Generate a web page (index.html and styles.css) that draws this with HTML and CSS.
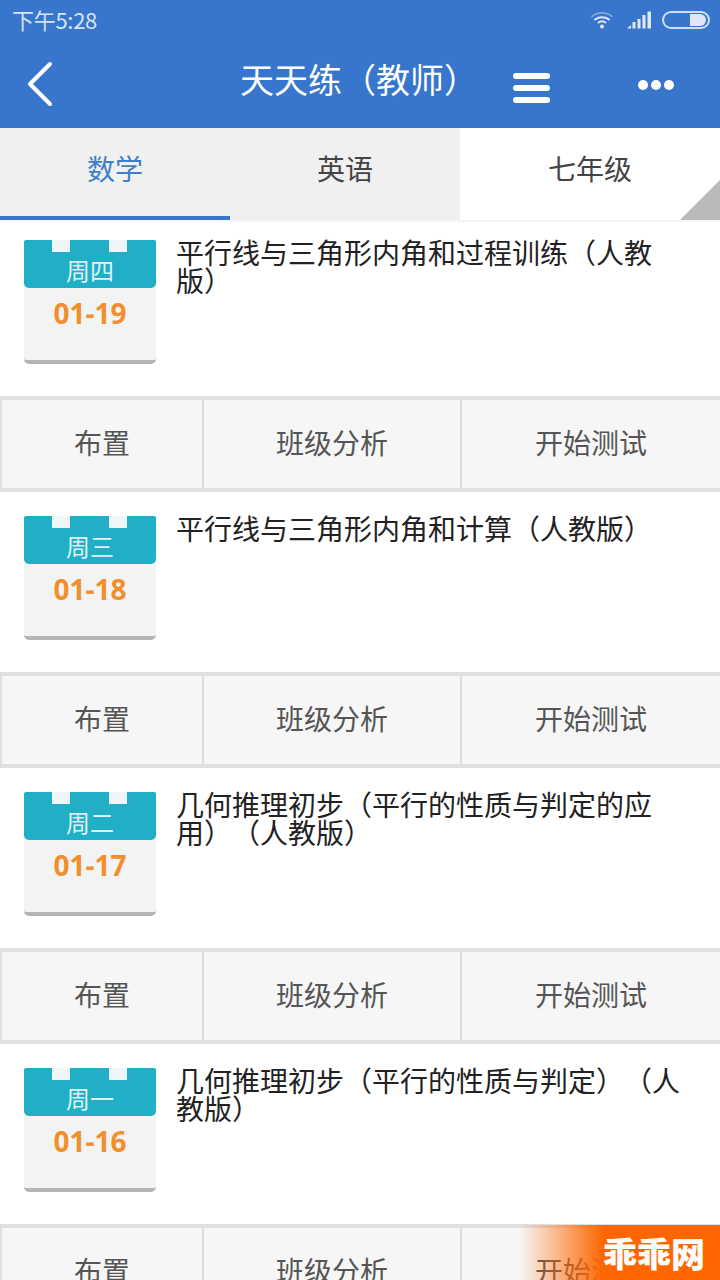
FILE: index.html
```html
<!DOCTYPE html>
<html lang="zh-CN">
<head>
    <meta charset="UTF-8">
    <meta name="viewport" content="width=device-width, initial-scale=1.0">
    <title>天天练（教师）</title>
    <link rel="stylesheet" href="styles.css">
</head>
<body>
    <!-- Status bar -->
    <div class="status-bar">
        <span class="status-time">下午5:28</span>
        <div class="status-icons">
            <svg class="wifi-icon" width="22" height="18" viewBox="0 0 22 18" fill="none" stroke="#dfe8f6" stroke-linecap="round">
                <path d="M1 5.500C6.500 0.500 15.500 0.500 21 5.500" stroke-width="1.500" opacity="0.5"/>
                <path d="M4 8.500C8 5.500 14 5.500 18 8.500" stroke-width="2"/>
                <path d="M7.500 11.500C9.500 10 12.500 10 14.500 11.500" stroke-width="2"/>
                <circle cx="11" cy="15.500" r="2" fill="#dfe8f6" stroke="none"/>
            </svg>
            <svg class="signal-icon" width="25" height="18" viewBox="0 0 25 18" fill="#dfe8f6">
                <path d="M0 17.500L4 14V17.500Z"/>
                <rect x="5.500" y="11" width="3" height="6.500"/>
                <rect x="10.500" y="8" width="3" height="9.500"/>
                <rect x="15.500" y="4" width="3" height="13.500"/>
                <rect x="20.500" y="0.500" width="3.500" height="17"/>
            </svg>
            <div class="battery"><div class="battery-level"></div></div>
        </div>
    </div>

    <!-- App bar -->
    <header class="app-bar">
        <svg class="back-icon" width="28" height="46" viewBox="0 0 28 46" fill="none" stroke="#fff" stroke-width="4" stroke-linecap="round" stroke-linejoin="round">
            <path d="M23 3L3 23L23 43"/>
        </svg>
        <h1 class="app-title">天天练（教师）</h1>
        <div class="menu-icon">
            <span></span>
            <span></span>
            <span></span>
        </div>
        <div class="more-icon">
            <span></span>
            <span></span>
            <span></span>
        </div>
    </header>

    <!-- Tabs -->
    <nav class="tabs">
        <div class="tab tab-active">数学</div>
        <div class="tab">英语</div>
        <div class="tab tab-grade">七年级</div>
    </nav>

    <!-- Exercise list -->
    <main class="exercise-list">
        <section class="exercise">
            <div class="exercise-body exercise-body-first">
                <div class="calendar">
                    <div class="calendar-head">周四</div>
                    <div class="calendar-date">01-19</div>
                </div>
                <div class="exercise-title">平行线与三角形内角和过程训练（人教版）</div>
            </div>
            <div class="actions">
                <div class="action action-assign">布置</div>
                <div class="action action-analysis">班级分析</div>
                <div class="action action-start">开始测试</div>
            </div>
        </section>
        <section class="exercise">
            <div class="exercise-body">
                <div class="calendar">
                    <div class="calendar-head">周三</div>
                    <div class="calendar-date">01-18</div>
                </div>
                <div class="exercise-title">平行线与三角形内角和计算（人教版）</div>
            </div>
            <div class="actions">
                <div class="action action-assign">布置</div>
                <div class="action action-analysis">班级分析</div>
                <div class="action action-start">开始测试</div>
            </div>
        </section>
        <section class="exercise">
            <div class="exercise-body">
                <div class="calendar">
                    <div class="calendar-head">周二</div>
                    <div class="calendar-date">01-17</div>
                </div>
                <div class="exercise-title">几何推理初步（平行的性质与判定的应用）（人教版）</div>
            </div>
            <div class="actions">
                <div class="action action-assign">布置</div>
                <div class="action action-analysis">班级分析</div>
                <div class="action action-start">开始测试</div>
            </div>
        </section>
        <section class="exercise">
            <div class="exercise-body">
                <div class="calendar">
                    <div class="calendar-head">周一</div>
                    <div class="calendar-date">01-16</div>
                </div>
                <div class="exercise-title">几何推理初步（平行的性质与判定）（人教版）</div>
            </div>
            <div class="actions">
                <div class="action action-assign">布置</div>
                <div class="action action-analysis">班级分析</div>
                <div class="action action-start">开始测试</div>
            </div>
        </section>
    </main>

    <!-- Site watermark -->
    <div class="watermark"><span class="watermark-text">乖乖网</span></div>
</body>
</html>
```

FILE: styles.css
```css
body {
    font-family: "Noto Sans CJK SC", "Noto Sans", sans-serif;
    margin: 0;
    width: 720px;
    height: 1280px;
    overflow: hidden;
    position: relative;
    background: #fff;
    color: #333;
    text-spacing-trim: space-all;
}

.status-bar {
    height: 40px;
    background: #3776cc;
    display: flex;
    justify-content: space-between;
    align-items: center;
    padding: 0 10px 0 12px;
}

.status-time {
    font-size: 22px;
    letter-spacing: -0.3px;
    line-height: 40px;
    margin-top: -3px;
    color: #d5e3f5;
}

.status-icons {
    display: flex;
    align-items: center;
}

.wifi-icon {
    margin-right: 14px;
}

.signal-icon {
    margin-right: 10px;
}

.battery {
    width: 48px;
    height: 18px;
    box-sizing: border-box;
    border: 2px solid #cfdff4;
    border-radius: 9px;
    display: flex;
    justify-content: flex-end;
    padding: 1px 2px;
}

.battery-level {
    width: 16px;
    background: #dfe6f5;
    border-radius: 0 6px 6px 0;
}

.app-bar {
    height: 88px;
    background: #3776cc;
    display: flex;
    align-items: center;
    position: relative;
}

.back-icon {
    margin-left: 27px;
    margin-top: 0;
}

.app-title {
    position: absolute;
    left: 240px;
    top: 16px;
    margin: 0;
    font-size: 34px;
    line-height: 46px;
    font-weight: 400;
    color: #fff;
    white-space: nowrap;
}

.menu-icon {
    position: absolute;
    left: 513px;
    top: 33px;
    width: 37px;
    display: flex;
    flex-direction: column;
    gap: 6px;
}

.menu-icon span {
    height: 6px;
    background: #fff;
    border-radius: 3px;
}

.more-icon {
    position: absolute;
    left: 638px;
    top: 40px;
    display: flex;
    gap: 3px;
}

.more-icon span {
    width: 10px;
    height: 10px;
    background: #fff;
    border-radius: 50%;
}

.tabs {
    height: 92px;
    display: flex;
    position: relative;
    z-index: 1;
    box-shadow: 0 2px 0 #f4f4f4;
}

.tab {
    width: 230px;
    box-sizing: border-box;
    background: #f0f0f0;
    font-size: 28px;
    line-height: 40px;
    padding-top: 20px;
    text-align: center;
    color: #444;
}

.tab-active {
    color: #3f7fc8;
    border-bottom: 4px solid #3776cc;
}

.tab-grade {
    width: 260px;
    background: #fff;
    position: relative;
}

.tab-grade::after {
    content: "";
    position: absolute;
    right: 0;
    bottom: 0;
    border-style: solid;
    border-width: 0 0 40px 40px;
    border-color: transparent transparent #b8baba transparent;
}

.exercise-list {
    background: #fff;
}

.exercise-body {
    height: 180px;
    box-sizing: border-box;
    padding: 24px 24px 0;
    display: flex;
}

.exercise-body-first {
    height: 176px;
    padding-top: 20px;
}

.calendar {
    width: 132px;
    height: 124px;
    flex-shrink: 0;
    box-sizing: border-box;
    background: #f2f4f4;
    border-bottom: 4px solid #b4b6b6;
    border-radius: 0 0 5px 5px;
    position: relative;
}

.calendar-head {
    height: 48px;
    box-sizing: border-box;
    padding-top: 11px;
    background: #20afc6;
    border-radius: 2px 2px 5px 5px;
    color: #dff3f6;
    font-size: 24px;
    line-height: 38px;
    text-align: center;
}

/* two notches at the top of the calendar */
.calendar::before,
.calendar::after {
    content: "";
    position: absolute;
    top: 0;
    width: 18px;
    height: 12px;
    background: #eef7f8;
}

.calendar::before {
    left: 28px;
}

.calendar::after {
    left: 85px;
}

.calendar-date {
    font-size: 28px;
    font-weight: 700;
    font-family: "Open Sans", sans-serif;
    line-height: 36px;
    padding-top: 7px;
    text-align: center;
    color: #f28e2b;
}

.exercise-title {
    margin-left: 20px;
    font-size: 28px;
    line-height: 28px;
    margin-top: -2px;
    color: #222;
}

.actions {
    height: 96px;
    box-sizing: border-box;
    display: flex;
    background: #f6f6f6;
    border-top: 4px solid #e0e0e0;
    border-bottom: 4px solid #e0e0e0;
}

.action {
    font-size: 28px;
    line-height: 84px;
    text-align: center;
    color: #555;
}

.action-assign {
    width: 202px;
    box-sizing: border-box;
    border-left: 2px solid #e0e0e0;
}

.action-analysis {
    width: 260px;
    box-sizing: border-box;
    border-left: 2px solid #dcdcdc;
    border-right: 2px solid #dcdcdc;
}

.action-start {
    width: 258px;
}

.watermark {
    position: absolute;
    right: 0;
    bottom: 0;
    width: 200px;
    height: 55px;
    background: linear-gradient(to right, rgba(255, 102, 0, 0), #ff6600 42%);
    z-index: 2;
}

.watermark-text {
    position: absolute;
    left: 83px;
    top: 8px;
    font-size: 34px;
    line-height: 40px;
    font-weight: 900;
    color: #fff;
    white-space: nowrap;
}
```
